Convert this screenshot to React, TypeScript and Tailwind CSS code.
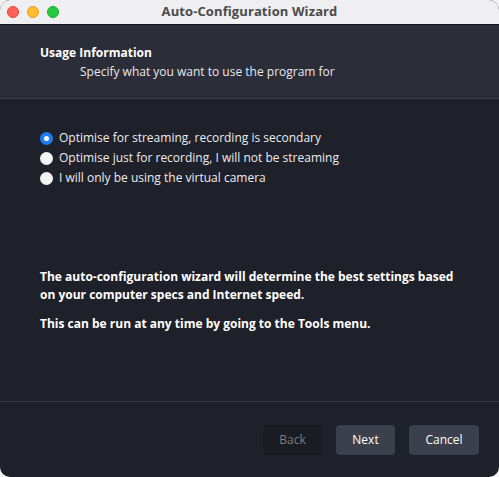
import React from 'react';

const options = [
  'Optimise for streaming, recording is secondary',
  'Optimise just for recording, I will not be streaming',
  'I will only be using the virtual camera',
];

function Radio({ checked }: { checked: boolean }) {
  if (checked) {
    return (
      <span className="w-[13px] h-[13px] rounded-full bg-[#1b7cf4] flex items-center justify-center shrink-0">
        <span className="w-[5px] h-[5px] rounded-full bg-white" />
      </span>
    );
  }
  return <span className="w-[13px] h-[13px] rounded-full bg-[#f4f4f4] shrink-0" />;
}

export default function App() {
  const selected = 0;
  return (
    <div className="w-[499px] h-[477px] bg-[#f4f4f6] font-['Open_Sans',sans-serif]">
      <div className="w-full h-full rounded-[10px] overflow-hidden flex flex-col bg-[#1f212a]">
        {/* title bar */}
        <div className="h-[25px] shrink-0 bg-[#efeef0] border-b border-[#15161b] flex items-center relative">
          <div className="flex items-center gap-[8px] pl-[7px]">
            <span className="w-[12px] h-[12px] rounded-full bg-[#fe5f57] border border-[#e14640]" />
            <span className="w-[12px] h-[12px] rounded-full bg-[#febc2e] border border-[#dfa023]" />
            <span className="w-[12px] h-[12px] rounded-full bg-[#28c840] border border-[#1aab29]" />
          </div>
          <div className="absolute inset-0 flex items-center justify-center text-[13px] font-bold text-[#4b4b4d] tracking-[0.1px]">
            Auto-Configuration Wizard
          </div>
        </div>

        {/* header */}
        <div className="h-[74px] shrink-0 bg-[#2b2d39] border-b border-[#3a3c4a] px-[40px] pt-[19px] text-[12px] text-white">
          <div className="font-bold leading-[18px]">Usage Information</div>
          <div className="pl-[40px] leading-[18px] mt-[1px] text-[#e8e8ea]">Specify what you want to use the program for</div>
        </div>

        {/* body */}
        <div className="flex-1 flex flex-col px-[40px] pt-[29px] text-[12px] text-[#ececee]">
          <div className="flex flex-col">
            {options.map((o, i) => (
              <label key={o} className="h-[20px] flex items-center gap-[6px]">
                <Radio checked={i === selected} />
                <span>{o}</span>
              </label>
            ))}
          </div>
          <div className="mt-[80px] font-bold text-white leading-[18px]">
            <p>The auto-configuration wizard will determine the best settings based on your computer specs and Internet speed.</p>
            <p className="mt-[11px]">This can be run at any time by going to the Tools menu.</p>
          </div>
        </div>

        {/* footer */}
        <div className="h-[76px] shrink-0 border-t border-[#363845] flex justify-end items-start gap-[14px] pt-[23px] pr-[20px] text-[12px]">
          <button className="w-[59px] h-[30px] rounded-[4px] bg-[#1a1c23] text-[#7b7d85]">Back</button>
          <button className="w-[59px] h-[30px] rounded-[4px] bg-[#3c3f4c] text-white">Next</button>
          <button className="w-[70px] h-[30px] rounded-[4px] bg-[#3c3f4c] text-white">Cancel</button>
        </div>
      </div>
    </div>
  );
}
